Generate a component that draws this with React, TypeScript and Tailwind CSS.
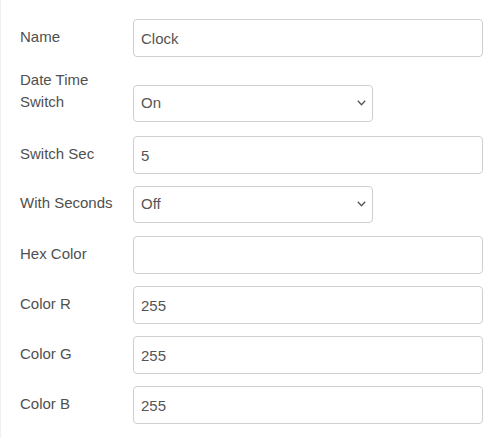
import React from "react";

const font = { fontFamily: '"Liberation Sans", Arial, sans-serif' };

function Label({ children }: { children: React.ReactNode }) {
  return (
    <div className="w-[113px] shrink-0 pr-3 pb-[9px] text-[15px] leading-[22px] text-[#505050]">
      {children}
    </div>
  );
}

function TextInput({ value }: { value: string }) {
  return (
    <input
      defaultValue={value}
      className="h-[38px] w-[350px] rounded-[4px] border border-[#cfcfcf] bg-white pl-[7px] text-[15px] text-[#555] outline-none"
      style={font}
    />
  );
}

function Select({ value, options }: { value: string; options: string[] }) {
  return (
    <div className="relative h-[37px] w-[240px]">
      <select
        defaultValue={value}
        className="h-[37px] w-[240px] appearance-none rounded-[4px] border border-[#cfcfcf] bg-white pl-[7px] text-[15px] text-[#555] outline-none"
        style={font}
      >
        {options.map((o) => (
          <option key={o}>{o}</option>
        ))}
      </select>
      <svg
        className="pointer-events-none absolute right-[7px] top-[15px]"
        width="9"
        height="6"
        viewBox="0 0 9 6"
        fill="none"
      >
        <path d="M0.8 0.8 L4.5 4.8 L8.2 0.8" stroke="#555" strokeWidth="1.3" />
      </svg>
    </div>
  );
}

export default function App() {
  return (
    <div
      className="min-h-[438px] w-[499px] border-l border-[#f0f0f0] bg-white pl-[19px] pt-[19px]"
      style={font}
    >
      <div className="flex items-end">
        <Label>Name</Label>
        <TextInput value="Clock" />
      </div>
      <div className="mt-[12px] flex items-end">
        <Label>
          Date Time
          <br />
          Switch
        </Label>
        <Select value="On" options={["On", "Off"]} />
      </div>
      <div className="mt-[14px] flex items-end">
        <Label>Switch Sec</Label>
        <TextInput value="5" />
      </div>
      <div className="mt-[12px] flex items-end">
        <Label>With Seconds</Label>
        <Select value="Off" options={["On", "Off"]} />
      </div>
      <div className="mt-[13px] flex items-end">
        <Label>Hex Color</Label>
        <TextInput value="" />
      </div>
      <div className="mt-[12px] flex items-end">
        <Label>Color R</Label>
        <TextInput value="255" />
      </div>
      <div className="mt-[12px] flex items-end">
        <Label>Color G</Label>
        <TextInput value="255" />
      </div>
      <div className="mt-[12px] flex items-end">
        <Label>Color B</Label>
        <TextInput value="255" />
      </div>
    </div>
  );
}
